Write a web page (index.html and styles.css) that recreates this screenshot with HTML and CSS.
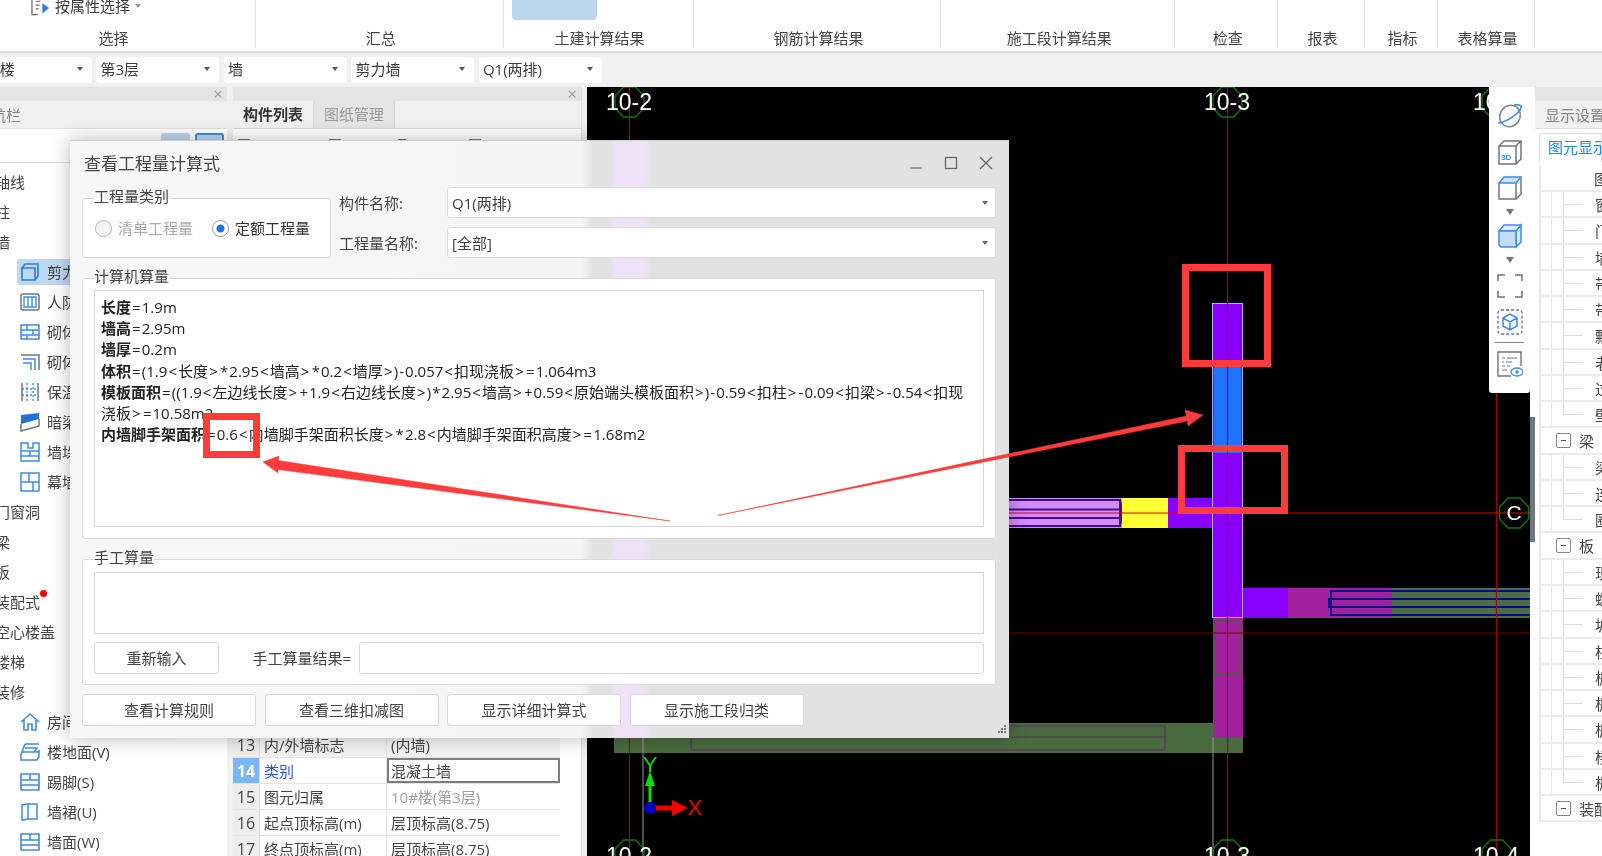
FILE: index.html
```html
<!DOCTYPE html>
<html lang="zh-CN">
<head>
<meta charset="utf-8">
<title>查看工程量计算式</title>
<link rel="stylesheet" href="styles.css">
</head>
<body>
<div class="app">
  <header class="ribbon">
    <div class="rgroup g1">
      <div class="rtop"><svg class="attr-ic" viewBox="0 0 20 20"><path d="M7 1H1v18h6M5 5h5M5 9h4M5 13h3" fill="none" stroke="#666" stroke-width="1.300"/><path d="M12 7l7 5-7 6z" fill="#2f7fd8"/></svg><span>按属性选择</span><i class="caret gray"></i></div>
      <div class="rlabel">选择</div>
    </div>
    <div class="rgroup g2"><div class="rtop"></div><div class="rlabel">汇总</div></div>
    <div class="rgroup g3"><div class="rtop"><span class="rbtn"></span></div><div class="rlabel">土建计算结果</div></div>
    <div class="rgroup g4"><div class="rtop"></div><div class="rlabel">钢筋计算结果</div></div>
    <div class="rgroup g5"><div class="rtop"></div><div class="rlabel">施工段计算结果</div></div>
    <div class="rgroup g6"><div class="rtop"></div><div class="rlabel">检查</div></div>
    <div class="rgroup g7"><div class="rtop"></div><div class="rlabel">报表</div></div>
    <div class="rgroup g8"><div class="rtop"></div><div class="rlabel">指标</div></div>
    <div class="rgroup g9"><div class="rtop"></div><div class="rlabel">表格算量</div></div>
  </header>

  <div class="combos">
    <div class="combo"><span>10#楼</span><i class="caret"></i></div>
    <div class="combo"><span>第3层</span><i class="caret"></i></div>
    <div class="combo"><span>墙</span><i class="caret"></i></div>
    <div class="combo"><span>剪力墙</span><i class="caret"></i></div>
    <div class="combo"><span>Q1(两排)</span><i class="caret"></i></div>
  </div>

  <main class="work">
    <aside class="nav">
      <div class="strip"><span class="x">×</span></div>
      <div class="ptitle nav-title">导航栏</div>
      <div class="nav-tools"><span class="ntool"></span><span class="ntool alt-tool"></span></div>
      <ul class="tree">
        <li class="t1">轴线</li>
        <li class="t1">柱</li>
        <li class="t1">墙</li>
        <li class="t2 sel"><svg class="ic" viewBox="0 0 20 20"><path d="M2 6h13v12H2zM2 6l3-4h13v12l-3 4" fill="none" stroke="#2f7fe0" stroke-width="1.700"/></svg>剪力墙(Q)</li>
        <li class="t2"><svg class="ic" viewBox="0 0 20 20"><rect x="1" y="2" width="18" height="16" rx="2" fill="none" stroke="#6d7480" stroke-width="1.500"/><path d="M4 5h12v10H4zM8 5v10M12 5v10" fill="none" stroke="#3d8bea" stroke-width="1.400"/></svg>人防门框墙</li>
        <li class="t2"><svg class="ic" viewBox="0 0 20 20"><path d="M1 3h18v14H1zM1 8h18M1 13h18M7 3v5M13 8v5M7 13v4" fill="none" stroke="#3d8bea" stroke-width="1.500"/></svg>砌体墙(Q)</li>
        <li class="t2"><svg class="ic" viewBox="0 0 20 20"><path d="M1 3h18v15" fill="none" stroke="#6d7480" stroke-width="1.500"/><path d="M3 7h12v11M3 11h8v7" fill="none" stroke="#3d8bea" stroke-width="1.500"/></svg>砌体加筋(Y)</li>
        <li class="t2"><svg class="ic" viewBox="0 0 20 20"><path d="M2 1v18M18 1v18" stroke="#6d7480" stroke-width="1.500"/><path d="M7 1v18M13 1v18M2 7h16M2 13h16" stroke="#3d8bea" stroke-width="1.300" stroke-dasharray="2 2"/></svg>保温层(H)</li>
        <li class="t2"><svg class="ic" viewBox="0 0 20 20"><path d="M1 3l18-2v6L1 12z" fill="#1f72e0"/><path d="M1 12v7l18-5V7" fill="none" stroke="#6d7480" stroke-width="1.500"/></svg>暗梁(A)</li>
        <li class="t2"><svg class="ic" viewBox="0 0 20 20"><path d="M1 1h7v5h5V1h6v18H1zM1 9h18M1 14h18M10 9v5" fill="none" stroke="#3d8bea" stroke-width="1.500"/></svg>墙垛(E)</li>
        <li class="t2"><svg class="ic" viewBox="0 0 20 20"><path d="M1 1h18v18H1zM1 10h18M9 1v9M13 10v9" fill="none" stroke="#3d8bea" stroke-width="1.500"/></svg>幕墙(Q)</li>
        <li class="t1">门窗洞</li>
        <li class="t1">梁</li>
        <li class="t1">板</li>
        <li class="t1 dotted">装配式<b class="dot"></b></li>
        <li class="t1">空心楼盖</li>
        <li class="t1">楼梯</li>
        <li class="t1">装修</li>
        <li class="t2"><svg class="ic" viewBox="0 0 20 20"><path d="M1 10L10 2l9 8M4 8v10h4v-6h4v6h4V8" fill="none" stroke="#3d8bea" stroke-width="1.600"/></svg>房间(F)</li>
        <li class="t2"><svg class="ic" viewBox="0 0 20 20"><path d="M5 2h14M5 2L2 10M5 6h12L14 10M2 10h16l1-1v6l-2 3H1v-6z" fill="none" stroke="#3d8bea" stroke-width="1.500"/></svg>楼地面(V)</li>
        <li class="t2"><svg class="ic" viewBox="0 0 20 20"><path d="M1 2h18v16H1zM1 8h18M1 13h18M10 2v6" fill="none" stroke="#3d8bea" stroke-width="1.600"/></svg>踢脚(S)</li>
        <li class="t2"><svg class="ic" viewBox="0 0 20 20"><path d="M2 3l6-1v15l-6 1zM8 2h9v15H8" fill="none" stroke="#3d8bea" stroke-width="1.500"/></svg>墙裙(U)</li>
        <li class="t2"><svg class="ic" viewBox="0 0 20 20"><path d="M1 2h18v16H1zM1 8h18M1 13h18M10 2v6" fill="none" stroke="#3d8bea" stroke-width="1.600"/></svg>墙面(W)</li>
      </ul>
    </aside>

    <section class="mid">
      <div class="strip"><span class="x">×</span></div>
      <div class="tabs"><span class="tab on">构件列表</span><span class="tab">图纸管理</span></div>
      <div class="mid-list">
        <div class="mini"><b class="m1"></b><b class="m2"></b><b class="m3"></b><b class="m4"></b></div>
      </div>
      <div class="props">
        <div class="row alt"><span class="idx">13</span><span class="name">内/外墙标志</span><span class="val">(内墙)</span></div>
        <div class="row cur"><span class="idx">14</span><span class="name">类别</span><span class="val">混凝土墙</span></div>
        <div class="row"><span class="idx">15</span><span class="name">图元归属</span><span class="val mute">10#楼(第3层)</span></div>
        <div class="row"><span class="idx">16</span><span class="name">起点顶标高(m)</span><span class="val">层顶标高(8.75)</span></div>
        <div class="row"><span class="idx">17</span><span class="name">终点顶标高(m)</span><span class="val">层顶标高(8.75)</span></div>
      </div>
    </section>

    <section class="canvas">
      <svg class="cad" viewBox="587 87 943 769">
        <defs><polygon id="oct" points="-6,-15 6,-15 14.500,-6 14.500,6 6,15 -6,15 -14.500,6 -14.500,-6" fill="none" stroke="#0a7a0a" stroke-width="1.300"/></defs>
        <rect x="614" y="723" width="629" height="30" fill="#4a6b3f"/>
        <path d="M691 726h474v24H691zM691 737h476" fill="none" stroke="#4d4d4d" stroke-width="2"/>
        <rect x="1008" y="498" width="114" height="30" fill="#cf8cff"/>
        <path d="M1008 500h112v26H1008M1008 509.500h114M1008 518h114M1120 500q3 13 0 26" fill="none" stroke="#4b0a86" stroke-width="2"/>
        <rect x="1122" y="498" width="46" height="30" fill="#ffff33"/>
        <rect x="1168" y="498" width="75" height="30" fill="#8a00ff"/>
        <rect x="1212.500" y="303.500" width="30" height="314" fill="#8a00ff" stroke="#b9a4ff" stroke-width="1"/>
        <rect x="1214" y="366" width="27" height="87" fill="#1f73ff"/>
        <rect x="1243" y="588" width="45" height="30" fill="#8a00ff"/>
        <rect x="1288" y="588" width="104" height="30" fill="#a3209f"/>
        <rect x="1392" y="588" width="138" height="30" fill="#4a6f43"/>
        <path d="M1530 591H1331v24h199M1530 599H1329v8h201" fill="none" stroke="#0b0b8a" stroke-width="2"/>
        <rect x="1213" y="618" width="30" height="120" fill="#a3209f"/>
        <rect x="1215" y="621" width="25" height="54" rx="2" fill="none" stroke="#555" stroke-width="2"/>
        <path d="M643 737v119M1213 737v119" stroke="#9a9a9a" stroke-width="1"/>
        <path d="M629.500 87v769M1227.500 87v769M1496.500 87v769" stroke="#a30000" stroke-width="1.200"/>
        <path d="M1008 513h522" stroke="#e60000" stroke-width="1"/>
        <path d="M587 633h943" stroke="#7a0000" stroke-width="1.200"/>
        <use href="#oct" x="629.500" y="102"/><use href="#oct" x="1227.500" y="102"/><use href="#oct" x="1496.500" y="102"/>
        <use href="#oct" x="629.500" y="855"/><use href="#oct" x="1227.500" y="855"/><use href="#oct" x="1496.500" y="855"/>
        <use href="#oct" x="1514" y="513"/>
        <g class="axis" text-anchor="middle">
          <text x="629" y="110">10-2</text><text x="1227" y="110">10-3</text><text x="1496" y="110">10-4</text>
          <text x="629" y="864">10-2</text><text x="1227" y="864">10-3</text><text x="1496" y="864">10-4</text>
          <text class="axc" x="1514" y="520">C</text>
        </g>
        <path d="M650 808V785" stroke="#00e000" stroke-width="3"/>
        <path d="M650 771l-5 15h10z" fill="#00e000"/>
        <path d="M655 808h18" stroke="#f00000" stroke-width="5"/>
        <path d="M672 800l16 8-16 8z" fill="#f00000"/>
        <circle cx="650" cy="808" r="6" fill="#0000c8"/>
        <text class="ax-y" x="650" y="772" text-anchor="middle">Y</text>
        <text class="ax-x" x="695" y="815" text-anchor="middle">X</text>
      </svg>
      <div class="tools">
        <svg class="tool" viewBox="0 0 26 26"><ellipse cx="13" cy="13" rx="10" ry="11" transform="rotate(35 13 13)" fill="none" stroke="#7d8590" stroke-width="1.500"/><path d="M1 20C7 20 21 12 24 5 25 2 21 1 17 2" fill="none" stroke="#3d8bea" stroke-width="1.700"/></svg>
        <svg class="tool" viewBox="0 0 26 26"><path d="M2 7h17v18H2zM2 7l5-5h17v18l-5 5M19 7l5-5" fill="none" stroke="#6d7480" stroke-width="1.500"/><text class="t3d" x="4" y="21">3D</text></svg>
        <svg class="tool" viewBox="0 0 26 26"><path d="M2 8v16h17V8M19 24l5-5V3" fill="none" stroke="#6d7480" stroke-width="1.500"/><path d="M2 8l5-6h17l-5 6z" fill="#cfe2fa" stroke="#3d8bea" stroke-width="1.500"/></svg>
        <i class="tri tight"></i>
        <svg class="tool tight" viewBox="0 0 26 26"><path d="M2 8l5-6h17l-5 6zM19 8l5-6v17l-5 5z" fill="#dcebfc" stroke="#3d8bea" stroke-width="1.500"/><path d="M2 8h17v16H4l-2-2z" fill="#c5dcf8" stroke="#3d8bea" stroke-width="1.500"/></svg>
        <i class="tri tight"></i>
        <svg class="tool" viewBox="0 0 26 26"><path d="M1 8V2h7M18 2h7v6M25 18v6h-7M8 24H1v-6" fill="none" stroke="#6d7480" stroke-width="1.500"/></svg>
        <svg class="tool" viewBox="0 0 26 26"><rect x="1" y="1" width="24" height="24" rx="3" fill="none" stroke="#6d7480" stroke-width="1.300" stroke-dasharray="3 2"/><path d="M13 5l7 4v8l-7 4-7-4V9zM6 9l7 4 7-4M13 13v8" fill="none" stroke="#3d8bea" stroke-width="1.500"/></svg>
        <span class="tdiv"></span>
        <svg class="tool" viewBox="0 0 26 26"><path d="M24 15V1H1v24h13" fill="none" stroke="#6d7480" stroke-width="1.400"/><path d="M5 7h3M10 7h10M5 11h2M9 11h6M5 15h3M10 15h3M5 19h5" stroke="#6d7480" stroke-width="1"/><ellipse cx="20" cy="21" rx="6" ry="4" fill="#fff" stroke="#3d8bea" stroke-width="1.300"/><circle cx="20" cy="21" r="1.700" fill="#3d8bea"/></svg>
      </div>
    </section>

    <div class="rail"><span class="handle"></span></div>

    <aside class="display">
      <div class="strip"></div>
      <div class="ptitle disp-title">显示设置</div>
      <div class="disp-tabs"><span class="disp-tab">图元显示</span></div>
      <div class="dtree">
        <div class="dhead">图层构件</div>
        <div class="drow">窗</div><div class="drow">门</div><div class="drow">墙洞</div><div class="drow">带形窗</div><div class="drow">带形洞</div><div class="drow">飘窗</div><div class="drow">老虎窗</div><div class="drow">过梁</div><div class="drow end">壁龛</div>
        <div class="dgroup"><i class="minus"></i>梁</div>
        <div class="drow">梁</div><div class="drow">连梁</div><div class="drow end">圈梁</div>
        <div class="dgroup"><i class="minus"></i>板</div>
        <div class="drow">现浇板</div><div class="drow">螺旋板</div><div class="drow">坡道</div><div class="drow">柱帽</div><div class="drow">板洞</div><div class="drow">板受力筋</div><div class="drow">板负筋</div><div class="drow">楼层板带</div><div class="drow end">板加腋</div>
        <div class="dgroup"><i class="minus"></i>装配式</div>
      </div>
    </aside>
  </main>

  <div class="dialog">
    <div class="dtitle">
      <span>查看工程量计算式</span>
      <span class="wctl">
        <svg viewBox="0 0 14 14"><path d="M1 12h12" stroke="#777" stroke-width="1.300"/></svg>
        <svg viewBox="0 0 14 14"><rect x="1.500" y="1.500" width="11" height="11" fill="none" stroke="#666" stroke-width="1.300"/></svg>
        <svg viewBox="0 0 14 14"><path d="M1 1l12 12M13 1L1 13" stroke="#666" stroke-width="1.300"/></svg>
      </span>
    </div>
    <div class="top">
      <fieldset class="box kind">
        <legend>工程量类别</legend>
        <div class="radios">
          <label class="radio off"><i></i>清单工程量</label>
          <label class="radio"><i class="on"></i>定额工程量</label>
        </div>
      </fieldset>
      <div class="fields">
        <div class="field"><label>构件名称:</label><div class="select"><span>Q1(两排)</span><i class="caret small"></i></div></div>
        <div class="field"><label>工程量名称:</label><div class="select"><span>[全部]</span><i class="caret small"></i></div></div>
      </div>
    </div>
    <fieldset class="box calc">
      <legend>计算机算量</legend>
      <div class="formula">
        <div><b>长度</b><span class="op">=</span>1.9m</div>
        <div><b>墙高</b><span class="op">=</span>2.95m</div>
        <div><b>墙厚</b><span class="op">=</span>0.2m</div>
        <div><b>体积</b><span class="op">=</span>(1.9<span class="op">&lt;</span>长度<span class="op">&gt;</span><span class="op">*</span>2.95<span class="op">&lt;</span>墙高<span class="op">&gt;</span><span class="op">*</span>0.2<span class="op">&lt;</span>墙厚<span class="op">&gt;</span>)<span class="op">-</span>0.057<span class="op">&lt;</span>扣现浇板<span class="op">&gt;</span><span class="op">=</span>1.064m3</div>
        <div><b>模板面积</b><span class="op">=</span>((1.9<span class="op">&lt;</span>左边线长度<span class="op">&gt;</span><span class="op">+</span>1.9<span class="op">&lt;</span>右边线长度<span class="op">&gt;</span>)<span class="op">*</span>2.95<span class="op">&lt;</span>墙高<span class="op">&gt;</span><span class="op">+</span>0.59<span class="op">&lt;</span>原始端头模板面积<span class="op">&gt;</span>)<span class="op">-</span>0.59<span class="op">&lt;</span>扣柱<span class="op">&gt;</span><span class="op">-</span>0.09<span class="op">&lt;</span>扣梁<span class="op">&gt;</span><span class="op">-</span>0.54<span class="op">&lt;</span>扣现<br>浇板<span class="op">&gt;</span><span class="op">=</span>10.58m2</div>
        <div><b>内墙脚手架面积</b><span class="op">=</span>0.6<span class="op">&lt;</span>内墙脚手架面积长度<span class="op">&gt;</span><span class="op">*</span>2.8<span class="op">&lt;</span>内墙脚手架面积高度<span class="op">&gt;</span><span class="op">=</span>1.68m2</div>
      </div>
    </fieldset>
    <fieldset class="box manual">
      <legend>手工算量</legend>
      <div class="manual-in"></div>
      <div class="manual-row">
        <button class="btn reset">重新输入</button>
        <label>手工算量结果=</label>
        <div class="result"></div>
      </div>
    </fieldset>
    <div class="actions">
      <button class="btn act">查看计算规则</button>
      <button class="btn act">查看三维扣减图</button>
      <button class="btn act">显示详细计算式</button>
      <button class="btn act">显示施工段归类</button>
    </div>
    <svg class="grip" viewBox="0 0 10 10"><path d="M8 1h2v2H8zM5 4h2v2H5zM8 4h2v2H8zM2 7h2v2H2zM5 7h2v2H5zM8 7h2v2H8z" fill="#777"/></svg>
  </div>

  <svg class="marks" viewBox="0 0 1602 856">
    <g fill="none" stroke="#ff3b3b" stroke-width="7">
      <rect x="1185.500" y="267.500" width="82" height="96"/>
      <rect x="1181.500" y="448.500" width="103" height="62"/>
      <rect x="206.500" y="416.500" width="50" height="38"/>
    </g>
    <path d="M263 462L279 456 278.500 460.500 670 521 278 469.500 278 473z" fill="#ff3b3b" stroke="#ff3b3b" stroke-width=".5"/>
    <path d="M1203 415L1185 410 1186.500 416 718 515.500 1187.500 421 1188 426z" fill="#ff3b3b" stroke="#ff3b3b" stroke-width=".5"/>
  </svg>
</div>
</body>
</html>
```

FILE: styles.css
```css
* { box-sizing: border-box; }
html, body { margin: 0; padding: 0; }
body {
  width: 1602px; height: 856px; overflow: hidden; background: #f0f0f0; color: #3c3c3c;
  font: 15px/20px "Open Sans", "Noto Sans CJK SC", sans-serif;
}
.app { position: relative; width: 1602px; height: 856px; overflow: hidden; filter: blur(.4px); }
ul { list-style: none; margin: 0; padding: 0; }
i { display: block; font-style: normal; }

/* ribbon */
.ribbon { display: flex; height: 53px; background: #fff; border-bottom: 2px solid #dedede; padding-right: 67px; }
.rgroup { height: 48px; border-right: 1px solid #e2e2e2; display: flex; flex-direction: column; text-align: center; }
.g1 { width: 256px; padding-right: 31px; }
.g2 { width: 248px; } .g3 { width: 190px; } .g4 { width: 248px; } .g5 { width: 234px; }
.g6 { width: 103px; } .g7 { width: 87px; } .g8 { width: 73px; } .g9 { width: 97px; }
.rtop { height: 28px; display: flex; align-items: flex-start; justify-content: center; position: relative; }
.g1 .rtop { justify-content: flex-start; padding-left: 31px; margin-top: -4px; height: 32px; gap: 5px; }
.g3 .rtop { justify-content: flex-start; padding-left: 8px; }
.attr-ic { width: 19px; height: 20px; margin-top: 0; }
.rbtn { width: 85px; height: 20px; background: #bdd6f0; border-radius: 0 0 4px 4px; }
.rlabel { line-height: 20px; color: #444; padding-left: 3px; }
.caret { width: 0; height: 0; border: 3px solid transparent; border-top: 4px solid #555; border-bottom: 0; }
.caret.gray { border-top-color: #999; margin-top: 8px; }
.caret.small { border-width: 3px; border-top: 4px solid #666; border-bottom: 0; }

/* combos */
.combos { height: 32px; display: flex; gap: 4.800px; margin-left: -31px; padding-top: 4px; }
.combo { width: 122.700px; height: 26px; background: #fff; border-radius: 3px; padding: 0 9px 2px 4px; display: flex; align-items: center; justify-content: space-between; white-space: nowrap; }

/* workspace */
.work { display: flex; height: 771px; padding-top: 2px; }
.strip { height: 14px; background: #e4e4e4; display: flex; justify-content: flex-end; }
.x { font-size: 17px; line-height: 14px; color: #999; padding-right: 4px; }
.ptitle { height: 28px; line-height: 28px; background: #f0f0f0; color: #888; white-space: nowrap; border-bottom: 1px solid #e0e0e0; }

.nav { width: 227px; background: #fff; overflow: hidden; flex: none; }
.nav-title { margin-left: -24px; }
.nav-tools { height: 34px; display: flex; justify-content: flex-end; gap: 5px; padding: 4px 3px 0 0; border-bottom: 1px solid #ddd; }
.ntool { width: 29px; height: 24px; background: #bcd6f1; border-radius: 3px; }
.alt-tool { border: 2px solid #3d8bea; }
.tree { padding-top: 4px; }
.tree li { height: 30px; line-height: 30px; white-space: nowrap; position: relative; color: #444; }
.t1 { margin-left: -5px; }
.t2 { margin-left: 17px; padding-left: 3px; display: flex; align-items: center; gap: 7px; width: 170px; border-radius: 3px; }
.sel { background: #bfd8f2; height: 26px !important; margin-top: 2px; margin-bottom: 2px; line-height: 26px !important; }
.ic { width: 20px; height: 20px; flex: none; }
.dotted { width: fit-content; }
.dot { position: absolute; right: -7px; top: 3px; width: 7px; height: 7px; border-radius: 50%; background: #f00; }

.mid { width: 349px; margin-left: 6px; flex: none; background: #fff; border-right: 1px solid #ddd; display: flex; flex-direction: column; overflow: hidden; }
.tabs { display: flex; height: 28px; background: #f0f0f0; border-bottom: 1px solid #d8d8d8; }
.tab { width: 81px; text-align: center; line-height: 27px; color: #999; background: #e4e4e4; border-right: 1px solid #d0d0d0; }
.tab.on { background: #f0f0f0; color: #333; font-weight: 700; border-right: 1px solid #d8d8d8; }
.mid-list { height: 603px; flex: none; }
.mini { display: flex; height: 14px; padding-top: 10px; }
.mini b { display: block; width: 12px; height: 4px; background: #3c8ae0; }
.mini .m1 { background: #777; margin-left: 5px; }
.mini .m2 { margin-left: 79px; }
.mini .m3 { background: #666; margin-left: 57px; width: 8px; }
.mini .m4 { margin-left: 63px; }
.row { display: flex; width: 327px; height: 26px; line-height: 26px; border-bottom: 1px solid #e4e4e4; flex: none; color: #444; }
.idx { width: 27px; background: #eee; text-align: center; font-size: 16px; flex: none; border-right: 1px solid #ddd; }
.name { width: 127px; padding-left: 4px; border-right: 1px solid #e4e4e4; flex: none; white-space: nowrap; }
.val { width: 173px; padding-left: 4px; white-space: nowrap; }
.alt { background: #f3f3f3; }
.mute { color: #a0a0a0; }
.cur .idx { background: #79b7f4; color: #fff; font-weight: 700; }
.cur .name { color: #2b55ff; }
.cur .val { border: 2px solid #7d7d7d; background: #fff; padding-left: 2px; line-height: 22px; }

.canvas { width: 943px; margin-left: 5px; flex: none; background: #000; position: relative; overflow: hidden; }
.cad { display: block; width: 943px; height: 769px; }
.axis text { fill: #fff; font: 23px "Liberation Sans", sans-serif; }
.axis .axc { font-size: 21px; }
.ax-y { fill: #00e000; font: 22px "Liberation Sans", sans-serif; }
.ax-x { fill: #f00000; font: 22px "Liberation Sans", sans-serif; }
.tools { position: absolute; right: 0; top: 0; width: 41px; height: 306px; background: #fff; border-radius: 0 0 3px 3px; padding-top: 6px; display: flex; flex-direction: column; align-items: center; }
.tool { width: 26px; height: 26px; margin-top: 10px; flex: none; }
.tool.tight { margin-top: 8px; }
.t3d { font: 700 8px "Liberation Sans", sans-serif; fill: #3d8bea; }
.tri { width: 0; height: 0; border: 4px solid transparent; border-top: 6px solid #6d7480; border-bottom: 0; margin-top: 8px; flex: none; }
.tdiv { width: 29px; height: 1px; background: #7d8590; margin: 7px 0 -2px; flex: none; }

.rail { width: 5px; flex: none; background: #fff; padding-top: 330px; }
.handle { display: block; height: 125px; background: #6f7680; }

.display { flex: 1; background: #fff; overflow: hidden; min-width: 0; }
.disp-title { padding-left: 10px; }
.disp-tabs { height: 37px; padding: 4px 0 0 4px; background: #fff; }
.disp-tab { display: block; height: 29px; line-height: 27px; padding-left: 8px; color: #1e88e5; border: 1px solid #dcdcdc; border-bottom: 0; border-radius: 3px 0 0 0; white-space: nowrap; overflow: hidden; }
.dtree { margin-left: 4px; border-left: 2px solid #e8e8e8; }
.dhead, .drow, .dgroup { height: 26.280px; line-height: 26px; white-space: nowrap; border-bottom: 2px solid #ececec; color: #444; position: relative; }
.dhead { padding-left: 53px; height: 26px; }
.drow { padding-left: 54px; }
.drow::before { content: ""; position: absolute; left: 22px; top: 12px; width: 20px; height: 1px; background: #ddd; }
.drow::after { content: ""; position: absolute; left: 22px; top: 0; width: 1px; height: 100%; background: #ddd; }
.drow.end::after { height: 13px; }
.drow { background: linear-gradient(#e8e8e8, #e8e8e8) 10px 0 / 1px 100% no-repeat; }
.dgroup { padding-left: 38px; }
.minus { position: absolute; left: 15px; top: 5px; width: 15px; height: 15px; background: #fff; border: 1px solid #888; border-radius: 2px; }
.minus::before { content: ""; position: absolute; left: 4px; top: 6px; width: 5px; height: 1px; background: #555; }

/* dialog */
.dialog {
  position: absolute; left: 70px; top: 140px; width: 939px; height: 598px; padding: 0 13px 0 12px;
  border-top: 1px solid #cfcfcf; box-shadow: 0 0 18px rgba(0,0,0,.28);
  background: linear-gradient(90deg, #f7f7f7 0, #f5f5f5 512px, #e2e2e2 522px, #e2e2e2 540px, #eee1f8 545px, #eee1f8 574px, #e2e2e2 582px, #e2e2e2 100%);
}
.dtitle { height: 46px; display: flex; justify-content: space-between; align-items: center; font-size: 17px; color: #444; padding-left: 2px; }
.wctl { display: flex; gap: 21px; margin-right: 3px; margin-top: -3px; }
.wctl svg { width: 14px; height: 14px; }
.box { margin: 0; padding: 0 11px; border: 1px solid #d9d9d9; border-radius: 3px; background: #fff; min-width: 0; }
legend { padding: 0; line-height: 20px; font-size: 15px; color: #444; position: relative; top: -2px; }
.top { display: flex; height: 71px; gap: 8px; margin-bottom: 10px; }
.kind { width: 249px; height: 70px; margin-top: 1px; flex: none; }
.radios { display: flex; gap: 19px; padding: 10px 0 0 1px; }
.radio { display: flex; align-items: center; gap: 6px; color: #333; white-space: nowrap; height: 20px; }
.radio.off { color: #aaa; }
.radio i { width: 17px; height: 17px; border-radius: 50%; border: 1.500px solid #b5b5b5; background: #f4f4f4; flex: none; }
.radio i.on { background: radial-gradient(circle, #1f73e8 0, #1f73e8 3.500px, #fff 4.500px); border-color: #999; }
.fields { display: flex; flex-direction: column; gap: 9px; flex: 1; }
.field { display: flex; align-items: center; height: 31px; }
.field label { width: 108px; color: #444; flex: none; white-space: nowrap; }
.select { flex: 1; height: 31px; background: #fff; border: 1px solid #dcdcdc; border-radius: 3px; display: flex; align-items: center; justify-content: space-between; padding: 0 7px 0 4px; }
.calc { height: 271px; }
.formula { margin-top: 2px; height: 237px; border: 1px solid #d4d4d4; padding: 6px 6px 4px; line-height: 21.200px; color: #222; white-space: nowrap; overflow: hidden; }
.formula b { font-weight: 700; }
.op { padding: 0 1.100px; }
.manual { height: 136px; margin-top: 10px; }
.manual-in { margin-top: 3px; height: 62px; border: 1px solid #d4d4d4; }
.manual-row { display: flex; align-items: center; margin-top: 8px; height: 32px; }
.manual-row label { width: 140px; text-align: right; padding-right: 8px; flex: none; color: #444; white-space: nowrap; }
.result { flex: 1; height: 32px; border: 1px solid #d9d9d9; border-radius: 3px; background: #fff; }
.btn { font: inherit; color: #444; background: #fff; border: 1px solid #d9d9d9; border-radius: 3px; padding: 0; cursor: default; }
.reset { width: 125px; height: 32px; flex: none; }
.actions { display: flex; gap: 8.500px; margin-top: 9px; }
.act { width: 174px; height: 32px; }
.grip { position: absolute; right: 3px; bottom: 4px; width: 10px; height: 10px; }

.marks { position: absolute; left: 0; top: 0; width: 1602px; height: 856px; pointer-events: none; }
```
